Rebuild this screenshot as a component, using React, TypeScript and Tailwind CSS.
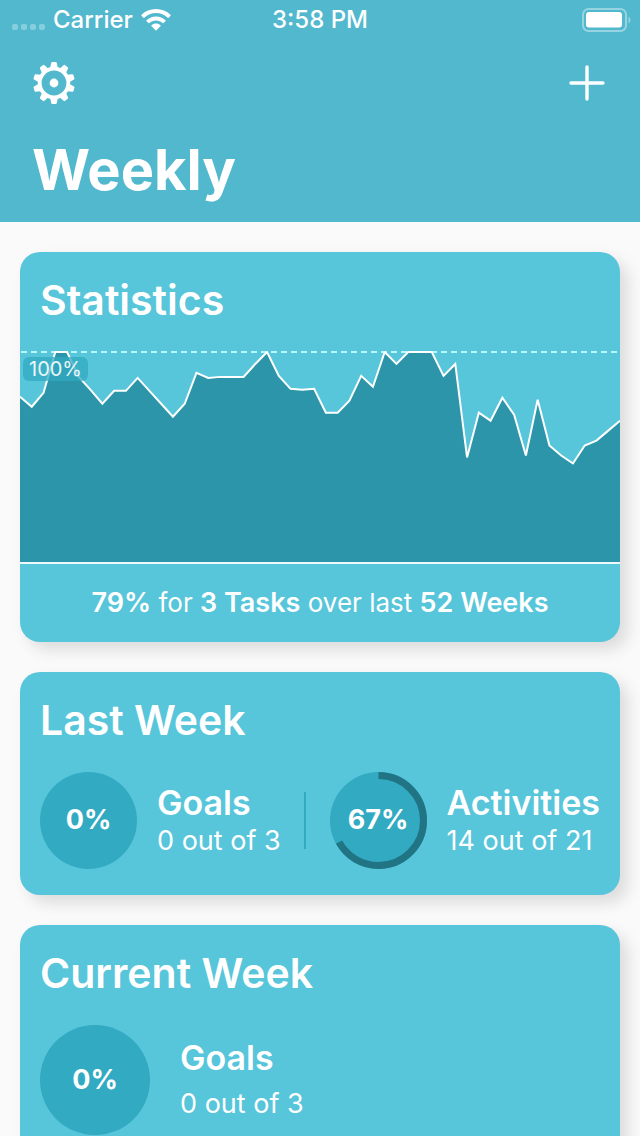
import type { FunctionComponent, ReactNode } from 'react';

interface CardProps {
  title: string;
  children: ReactNode;
}

interface ProgressRingProps {
  percent: number;
  className: string;
}

interface SummaryProps {
  label: string;
  done: number;
  total: number;
  large?: boolean;
}

const CHART_WIDTH = 600;
const CHART_HEIGHT = 212;

// Distance of each week's value from the top of the chart
const WEEKS = [
  46, 56, 42, 1, 1, 26, 39, 53, 40, 40, 27, 40, 53, 66, 53, 22, 27, 26, 26, 26,
  13, 1, 25, 38, 39, 38, 62, 62, 50, 25, 36, 1, 13, 1, 1, 1, 25, 13, 107, 62, 70,
  47, 64, 105, 49, 95, 105, 113, 95, 90, 80, 70,
];

const GEAR_TEETH = [0, 36, 72, 108, 144, 180, 216, 252, 288, 324];

const GearIcon = () => (
  <svg viewBox="-22 -22 44 44" className="size-[42px]" aria-hidden="true">
    <circle r="15" fill="none" stroke="currentColor" strokeWidth="4" />
    <circle r="4.6" fill="currentColor" />
    {GEAR_TEETH.map((angle) => (
      <path
        key={angle}
        d="M-4 -16 L-2.9 -21 Q-2.7 -21.9 -1.9 -21.9 H1.9 Q2.7 -21.9 2.9 -21 L4 -16Z"
        fill="currentColor"
        transform={`rotate(${angle})`}
      />
    ))}
  </svg>
);

const PlusIcon = () => (
  <svg
    viewBox="0 0 36 36"
    className="size-9"
    stroke="currentColor"
    strokeWidth="3.4"
    strokeLinecap="round"
    aria-hidden="true"
  >
    <path d="M18 2V34M2 18H34" />
  </svg>
);

const WifiIcon = () => (
  <svg viewBox="0 0 30 22" className="h-[22px] w-[30px]" fill="currentColor">
    <path d="M15 0C9.3 0 4.2 2.2.5 5.8q-.5.5 0 1L2.4 8.7q.4.4.9 0C6.4 5.7 10.5 4 15 4s8.6 1.7 11.7 4.7q.5.4.9 0l1.9-1.9q.5-.5 0-1C25.8 2.2 20.7 0 15 0Z" />
    <path d="M15 7.5c-3.7 0-7 1.4-9.5 3.7q-.5.5 0 1l2 1.9q.4.4.9 0c1.8-1.6 4.1-2.5 6.6-2.5s4.8.9 6.6 2.5q.5.4.9 0l2-1.9q.5-.5 0-1C22 8.9 18.7 7.5 15 7.5Z" />
    <path d="M15 14.6c-1.7 0-3.3.6-4.5 1.7q-.5.5 0 1l4 4q.5.5 1 0l4-4q.5-.5 0-1c-1.2-1.1-2.8-1.7-4.5-1.7Z" />
  </svg>
);

const BatteryIcon = () => (
  <svg viewBox="0 0 50 24" className="h-6 w-[50px]">
    <rect
      x="1"
      y="1"
      width="43"
      height="22"
      rx="5.5"
      fill="none"
      stroke="white"
      strokeWidth="2"
      opacity="0.4"
    />
    <rect x="4" y="4" width="36" height="15.6" rx="3" fill="white" />
    <path d="M46.5 8.5q2 1.2 2 3.5t-2 3.5Z" fill="white" opacity="0.4" />
  </svg>
);

const StatusBar = () => (
  <div className="grid h-10 grid-cols-3 items-center text-2xl font-medium">
    <div className="flex items-center gap-2 pl-3">
      <div className="flex gap-[3px] pt-3.5">
        <span className="size-1.5 rounded-xs bg-white/30" />
        <span className="size-1.5 rounded-xs bg-white/30" />
        <span className="size-1.5 rounded-xs bg-white/30" />
        <span className="size-1.5 rounded-xs bg-white/30" />
      </div>
      <span>Carrier</span>
      <WifiIcon />
    </div>
    <span className="text-center">3:58 PM</span>
    <div className="flex justify-end pr-2">
      <BatteryIcon />
    </div>
  </div>
);

const Card: FunctionComponent<CardProps> = ({ title, children }) => (
  <section className="rounded-[20px] bg-[#57c5da] shadow-[8px_8px_16px_rgba(0,0,0,0.12)]">
    <h2 className="px-5 pt-5 text-[41px] leading-[56px] font-semibold">
      {title}
    </h2>
    {children}
  </section>
);

const WeeksChart = () => {
  const line = WEEKS.map(
    (y, index) => `${(index * CHART_WIDTH) / (WEEKS.length - 1)},${y}`
  ).join(' ');

  return (
    <div className="relative mt-[23px] border-b-2 border-white/90">
      <svg
        viewBox={`0 0 ${CHART_WIDTH} ${CHART_HEIGHT}`}
        preserveAspectRatio="none"
        className="block h-[211px] w-full"
      >
        <polygon
          points={`0,${CHART_HEIGHT} ${line} ${CHART_WIDTH},${CHART_HEIGHT}`}
          fill="#2c95a9"
        />
        <path
          d={`M1 1H${CHART_WIDTH}`}
          stroke="#b5f8ff"
          strokeWidth="2"
          strokeDasharray="6 4"
        />
        <polyline
          points={line}
          fill="none"
          stroke="white"
          strokeWidth="2"
          vectorEffect="non-scaling-stroke"
        />
      </svg>
      <span className="absolute top-1.5 left-[3px] rounded-md bg-[#32aac2]/75 px-1.5 text-[20px] leading-6 text-white/90">
        100%
      </span>
    </div>
  );
};

const ProgressRing: FunctionComponent<ProgressRingProps> = ({
  percent,
  className,
}) => (
  <div className={`grid shrink-0 place-items-center ${className}`}>
    <svg viewBox="0 0 97 97" className="col-start-1 row-start-1 size-full">
      <circle cx="48.5" cy="48.5" r="48.5" fill="#32aac2" />
      {percent > 0 ? (
        <circle
          cx="48.5"
          cy="48.5"
          r="45"
          fill="none"
          stroke="#217484"
          strokeWidth="7"
          pathLength="100"
          strokeDasharray={`${percent} 100`}
          transform="rotate(-90 48.5 48.5)"
        />
      ) : null}
    </svg>
    <span className="col-start-1 row-start-1 text-[27px] font-bold">
      {percent}%
    </span>
  </div>
);

const Summary: FunctionComponent<SummaryProps> = ({
  label,
  done,
  total,
  large,
}) => (
  <div className={large ? 'space-y-2' : ''}>
    <h3 className="text-[34px] leading-10 font-semibold">{label}</h3>
    <p className="text-[27px] leading-9 whitespace-nowrap">
      {done} out of {total}
    </p>
  </div>
);

export default function App() {
  return (
    <div className="h-screen overflow-hidden bg-[#fafafa] font-['Inter','Liberation_Sans',sans-serif] text-white">
      <header className="bg-[#52b8ce] pb-4">
        <StatusBar />
        <div className="flex items-center justify-between pt-[22px] pr-[35px] pl-[33px]">
          <button type="button" aria-label="Settings">
            <GearIcon />
          </button>
          <button type="button" aria-label="Add task">
            <PlusIcon />
          </button>
        </div>
        <h1 className="mt-[30px] px-8 text-[56px] leading-[72px] font-bold">
          Weekly
        </h1>
      </header>

      <main className="flex flex-col gap-[30px] px-5 py-[30px]">
        <Card title="Statistics">
          <WeeksChart />
          <p className="py-5 text-center text-[26px] leading-[38px]">
            <b className="text-[27px] font-semibold">79%</b> for{' '}
            <b className="text-[27px] font-semibold">3 Tasks</b> over last{' '}
            <b className="text-[27px] font-semibold">52 Weeks</b>
          </p>
        </Card>

        <Card title="Last Week">
          <div className="flex items-center justify-between px-5 pt-6 pb-[26px]">
            <div className="flex items-center gap-5">
              <ProgressRing percent={0} className="size-[97px]" />
              <Summary label="Goals" done={0} total={3} />
            </div>
            <div className="h-[57px] w-0.5 bg-[#32aac2]" />
            <div className="flex items-center gap-5">
              <ProgressRing percent={67} className="size-[97px]" />
              <Summary label="Activities" done={14} total={21} />
            </div>
          </div>
        </Card>

        <Card title="Current Week">
          <div className="flex items-center gap-[30px] px-5 pt-6 pb-[26px]">
            <ProgressRing percent={0} className="size-[110px]" />
            <Summary label="Goals" done={0} total={3} large />
          </div>
        </Card>
      </main>
    </div>
  );
}
